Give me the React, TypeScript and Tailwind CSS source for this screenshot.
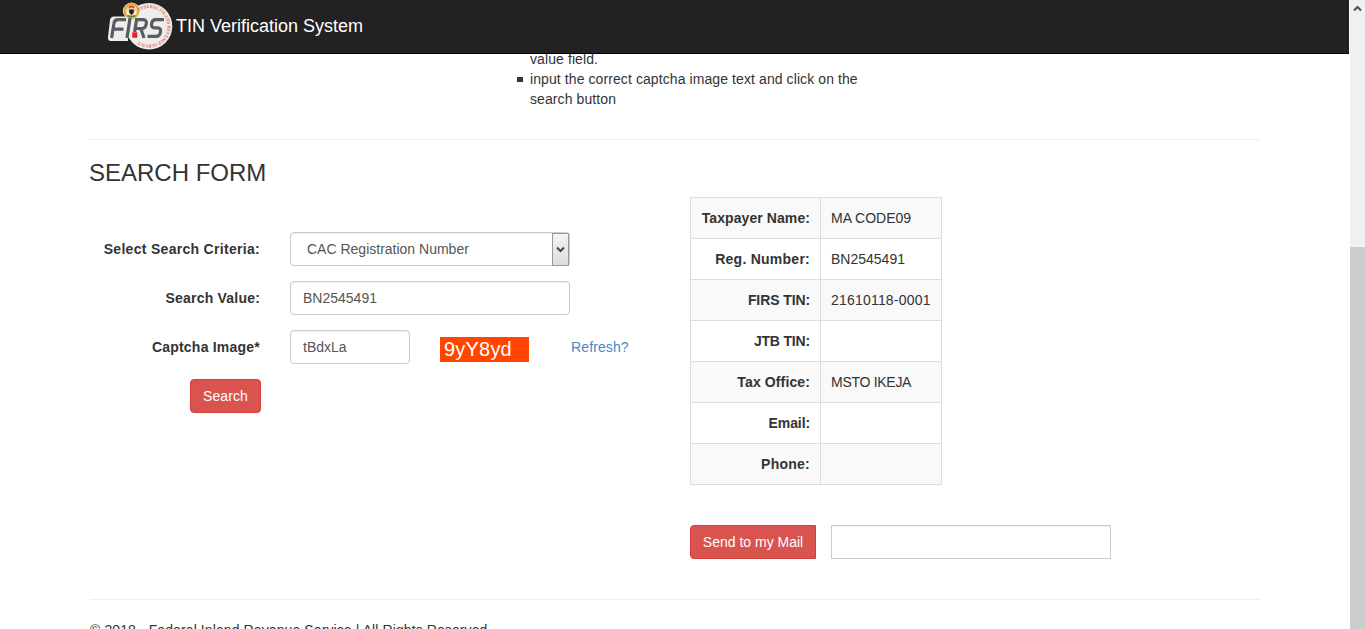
import type { ReactNode } from "react";

type Row = { name: string; nameClass: string; value?: string; valueClass?: string };

const rows: Row[] = [
  { name: "Taxpayer Name:", nameClass: "tracking-[0.08px]", value: "MA CODE09" },
  { name: "Reg. Number:", nameClass: "tracking-[0.25px]", value: "BN2545491" },
  { name: "FIRS TIN:", nameClass: "tracking-[-0.1px]", value: "21610118-0001", valueClass: "tracking-[0.2px]" },
  { name: "JTB TIN:", nameClass: "tracking-[-0.18px]" },
  { name: "Tax Office:", nameClass: "tracking-[0.12px]", value: "MSTO IKEJA", valueClass: "tracking-[-0.28px]" },
  { name: "Email:", nameClass: "tracking-[-0.1px]" },
  { name: "Phone:", nameClass: "tracking-[0.25px]" },
];

function Logo() {
  return (
    <svg width="68" height="52" viewBox="0 0 68 52" className="shrink-0">
      <defs>
        <path id="ring" d="M 33 11 A 18.3 18.3 0 1 1 31 40" />
      </defs>
      <circle cx="43" cy="26.3" r="23.3" fill="#ededed" />
      <path d="M8 16.5 H22 V41 H5 Q1.5 41 2 37 L4 20 Q4.5 16.5 8 16.5Z" fill="#ededed" />
      <circle cx="25.5" cy="11" r="8.6" fill="#ededed" />
      <circle cx="25.5" cy="11" r="7.9" fill="#d9a441" />
      <circle cx="25.5" cy="11" r="6.1" fill="#ecd08c" />
      <path d="M23.2 9.5 H27.8 V12.5 L25.5 15 L23.2 12.5Z" fill="#222" />
      <path d="M20.5 14.5 L21.8 9.5 L23.5 14.5Z M30.5 14.5 L29.2 9.5 L27.5 14.5Z" fill="#f3f3f3" />
      <path d="M23 7.6 Q25.5 5.4 28 7.6" stroke="#c8322a" strokeWidth="1.6" fill="none" />
      <path d="M21.5 15.6 Q25.5 17.2 29.5 15.6" stroke="#4d8a46" strokeWidth="1.2" fill="none" />
      <text fill="#f0605c" fontSize="4.8" fontFamily="Liberation Serif, serif" fontWeight="bold">
        <textPath href="#ring" textLength="79" lengthAdjust="spacingAndGlyphs">
          FEDERAL INLAND REVENUE SERVICE
        </textPath>
      </text>
      <g fill="none" stroke="#5b5c60" strokeWidth="3.2">
        <path d="M5.6 38 L7.9 23.5 Q8.4 19.6 12 19.6 H20 M7 29.2 H17.5" />
        <path d="M24 18 L21 38" />
        <path d="M28.6 32 L30.6 19.6 H37 Q41 19.6 40.3 23.8 Q39.6 28.5 35.8 28.5 H30 M34.8 28.5 L38 38" />
        <path d="M58 19.6 H49.6 Q46.2 19.6 45.6 23.6 Q45 27.8 48.6 27.8 H51.5 Q55.2 27.8 54.5 32 Q53.8 36.4 50 36.4 H41.5" />
      </g>
      <rect x="26.3" y="32.3" width="5" height="5.4" fill="#e31d23" />
    </svg>
  );
}

function FormRow({ label, labelClass, children }: { label: string; labelClass: string; children: ReactNode }) {
  return (
    <div className="mb-[15px] flex h-[34px] items-center">
      <label className={`w-[170px] text-right font-bold whitespace-nowrap ${labelClass}`}>{label}</label>
      <div className="ml-[30px] flex items-center">{children}</div>
    </div>
  );
}

const field =
  "h-[34px] border border-[#ccc] bg-white px-3 text-[14px] text-[#555] shadow-[inset_0_1px_1px_rgba(0,0,0,0.075)] outline-none";

export default function App() {
  return (
    <div className="flex h-[629px] w-[1365px] overflow-hidden bg-white font-['Liberation_Sans',Arial,sans-serif] text-[14px] leading-[20px] text-[#333]">
      <div className="flex h-full w-[1349px] flex-col">
        <header className="flex h-[54px] shrink-0 items-start border-b border-black bg-[#222] pl-[106px]">
          <Logo />
          <span className="mt-[16px] ml-[2px] text-[18px] whitespace-nowrap text-white">TIN Verification System</span>
        </header>
        <main className="min-h-0 flex-1 overflow-hidden pl-[90px]">
          <div className="w-[1170px]">
            <ul className="-mt-[5px] ml-[440px] w-[345px] tracking-[0.09px]">
              <li>value field.</li>
              <li className="flex">
                <span className="mt-[8px] mr-[7px] -ml-[13px] h-[5px] w-[6px] shrink-0 bg-[#333]" />
                <span>input the correct captcha image text and click on the search button</span>
              </li>
            </ul>
            <hr className="mt-[30px] border-[#eee]" />
            <h3 className="mt-[20px] mb-[11px] -ml-px text-[24px] leading-[26px]">SEARCH FORM</h3>
            <div className="flex h-[362px]">
              <form className="w-[600px] pt-[35px]">
                <FormRow label="Select Search Criteria:" labelClass="tracking-[0.3px]">
                  <div className={`${field} flex w-[280px] items-center rounded-[4px] pr-0`}>
                    <span className="flex-1 pl-1">CAC Registration Number</span>
                    <span className="flex h-[33px] w-[17px] items-center justify-center border border-[#999] bg-linear-to-b from-[#f3f3f3] to-[#dedede]">
                      <svg width="9" height="7" viewBox="0 0 9 7">
                        <path d="M1 1.5 L4.5 5 L8 1.5" fill="none" stroke="#444" strokeWidth="2" />
                      </svg>
                    </span>
                  </div>
                </FormRow>
                <FormRow label="Search Value:" labelClass="tracking-[0.2px]">
                  <input className={`${field} w-[280px] rounded-[4px]`} defaultValue="BN2545491" />
                </FormRow>
                <FormRow label="Captcha Image*" labelClass="tracking-[0.22px]">
                  <input className={`${field} w-[120px] rounded-[4px]`} defaultValue="tBdxLa" />
                  <span className="mt-[5px] ml-[30px] h-[25px] w-[89px] bg-[#ff4500] pl-1 text-[20px] leading-[25px] tracking-[0.2px] text-white">
                    9yY8yd
                  </span>
                  <a className="ml-[42px] tracking-[0.12px] text-[#428bca]">Refresh?</a>
                </FormRow>
                <button
                  type="button"
                  className="ml-[100px] h-[34px] w-[71px] rounded-[4px] border border-[#d43f3a] bg-[#d9534f] tracking-[0.1px] text-white"
                >
                  Search
                </button>
              </form>
              <div>
                <table className="w-[252px] border-collapse border border-[#ddd]">
                  <tbody>
                    {rows.map((row) => (
                      <tr key={row.name} className="h-[41px] odd:bg-[#f9f9f9]">
                        <th
                          className={`w-[130px] border border-[#ddd] px-[10px] py-0 text-right font-bold whitespace-nowrap ${row.nameClass}`}
                        >
                          {row.name}
                        </th>
                        <td className={`border border-[#ddd] px-[10px] py-0 whitespace-nowrap ${row.valueClass ?? ""}`}>
                          {row.value}
                        </td>
                      </tr>
                    ))}
                  </tbody>
                </table>
                <div className="mt-[40px] flex">
                  <button
                    type="button"
                    className="h-[34px] w-[126px] rounded-l-[4px] border border-[#d43f3a] bg-[#d9534f] text-white"
                  >
                    Send to my Mail
                  </button>
                  <input aria-label="Email address" className={`${field} ml-[15px] w-[280px]`} />
                </div>
              </div>
            </div>
            <hr className="mt-[40px] border-[#eee]" />
            <p className="mt-[20px] tracking-[0.1px] whitespace-pre">
              © 2018 - Federal Inland Revenue Service | All Rights Reserved.
            </p>
          </div>
        </main>
      </div>
      <div className="flex w-[16px] flex-col border-l border-white bg-[#f0f0f0]">
        <div className="flex h-[17px] items-center justify-center">
          <svg width="9" height="7" viewBox="0 0 9 7">
            <path d="M1 5.5 L4.5 2 L8 5.5" fill="none" stroke="#505050" strokeWidth="2" />
          </svg>
        </div>
        <div className="mt-[230px] flex-1 bg-[#cdcdcd]" />
      </div>
    </div>
  );
}
